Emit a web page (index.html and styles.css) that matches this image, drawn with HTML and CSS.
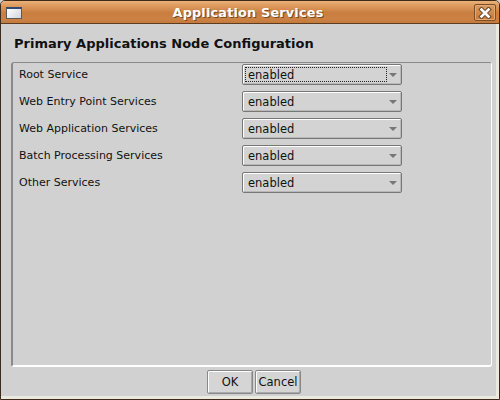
FILE: index.html
```html
<!DOCTYPE html>
<html>
<head>
<meta charset="utf-8">
<link rel="stylesheet" href="styles.css">
</head>
<body>
<div class="window">
  <div class="titlebar">
    <div class="winicon"></div>
    <div class="title">Application Services</div>
    <div class="close">
      <svg width="14" height="12" viewBox="0 0 14 12"><path d="M3.5 2.5 L10.5 9.5 M10.5 2.5 L3.5 9.5" stroke="#6b4220" stroke-width="4.5" stroke-linecap="square"/><path d="M3.5 2.5 L10.5 9.5 M10.5 2.5 L3.5 9.5" stroke="#fff" stroke-width="2.6" stroke-linecap="square"/></svg>
    </div>
  </div>
  <div class="client">
    <div class="heading">Primary Applications Node Configuration</div>
    <div class="panel">
      <div class="row"><span class="label">Root Service</span><div class="combo focus"><span class="val">enabled</span><span class="arrow"></span></div></div>
      <div class="row"><span class="label">Web Entry Point Services</span><div class="combo"><span class="val">enabled</span><span class="arrow"></span></div></div>
      <div class="row"><span class="label">Web Application Services</span><div class="combo"><span class="val">enabled</span><span class="arrow"></span></div></div>
      <div class="row"><span class="label">Batch Processing Services</span><div class="combo"><span class="val">enabled</span><span class="arrow"></span></div></div>
      <div class="row"><span class="label">Other Services</span><div class="combo"><span class="val">enabled</span><span class="arrow"></span></div></div>
    </div>
    <div class="buttons">
      <div class="btn">OK</div>
      <div class="btn">Cancel</div>
    </div>
  </div>
</div>
</body>
</html>
```
FILE: styles.css
```css
html, body { margin: 0; padding: 0; }
body { width: 500px; height: 400px; overflow: hidden; background: #d1d1d1; font-family: "DejaVu Sans", sans-serif; }
.window {
  width: 500px; height: 400px; box-sizing: border-box;
  border: 1px solid #3e2a18; border-radius: 5px 5px 0 0;
  display: flex; flex-direction: column; overflow: hidden;
  background: #d1d1d1;
}
.titlebar {
  height: 22px; flex: none; display: flex; align-items: center; position: relative;
  background: linear-gradient(#eab17a 0px, #dd9a5c 5px, #d28a4c 9px, #c97d3f 12px, #cd8245 18px, #c47a3d 22px);
  border-bottom: 1px solid #5c3d20;
}
.winicon {
  width: 14px; height: 9px; margin-left: 5px; margin-top: 1px;
  background: linear-gradient(135deg, #ffffff, #cfd6e0);
  border: 1px solid #5a5a5a; border-top: 2px solid #2c4a73;
}
.title {
  flex: 1; text-align: center; font-weight: bold; font-size: 12.8px; color: #fff;
  text-shadow: 1px 1px 0 #7a4b22; margin-left: 0; letter-spacing: 0.2px;
}
.close {
  width: 22px; height: 17px; box-sizing: border-box; margin-right: 3px; margin-top: 1px;
  border: 1px solid #7b4e25; border-radius: 2px;
  background: linear-gradient(#d99b61, #c27a3d);
  box-shadow: inset 0 0 0 1px #e4aa74;
  display: flex; align-items: center; justify-content: center;
}
.client {
  flex: 1; display: flex; flex-direction: column;
  border-right: 3px solid #ebe8df; border-bottom: 3px solid #ebe8df;
  background: #d1d1d1;
}
.heading {
  font-weight: bold; font-size: 13px; color: #111; padding: 13px 0 0 13px; height: 25px; box-sizing: border-box;
  line-height: 14px;
}
.panel {
  margin: 13px 4px 0 10px; height: 305px; box-sizing: border-box;
  border-style: solid; border-width: 1px 1px 2px 2px;
  border-color: #8a8a8a #fff #fff #8a8a8a;
  border-radius: 3px;
  padding-top: 1px;
  display: flex; flex-direction: column; gap: 6px;
}
.row { display: flex; align-items: center; height: 21px; }
.label { width: 223px; padding-left: 6px; font-size: 11px; color: #111; }
.combo {
  width: 160px; height: 21px; box-sizing: border-box; position: relative;
  border: 1px solid #777; border-radius: 2px;
  background: #d3d3d3;
  box-shadow: inset 1px 1px 0 #fff, inset -1px -1px 0 #b8b8b8;
  display: flex; align-items: center; font-size: 11.5px; color: #111;
}
.combo .val { padding-left: 5px; flex: 1; }
.combo.focus::after {
  content: ""; position: absolute; left: 2px; top: 2px; right: 14px; bottom: 2px;
  border: 1px dotted #222;
}
.arrow {
  width: 0; height: 0; margin-right: 4px; margin-top: 1px;
  border-left: 4px solid transparent; border-right: 4px solid transparent; border-top: 4px solid #777;
}
.buttons { display: flex; justify-content: center; gap: 2px; padding-top: 3px; padding-left: 11px; }
.btn {
  width: 46px; height: 24px; box-sizing: border-box; font-size: 11.5px; color: #111;
  border: 1px solid #888; border-radius: 2px; background: #d5d5d5;
  box-shadow: inset 1px 1px 0 #fff, inset -1px -1px 0 #aaa;
  display: flex; align-items: center; justify-content: center;
}
```
